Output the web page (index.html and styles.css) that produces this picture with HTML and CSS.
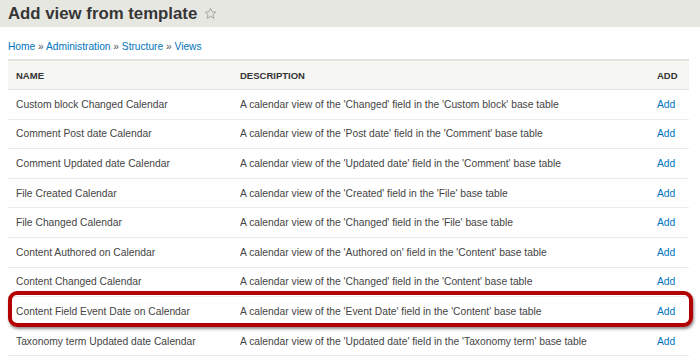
FILE: index.html
```html
<!DOCTYPE html>
<html lang="en">
<head>
<meta charset="UTF-8">
<title>Add view from template</title>
<link rel="stylesheet" href="styles.css">
</head>
<body>

<header class="page-head">
    <h1>Add view from template
        <svg class="star" width="13" height="13" viewBox="0 0 24 24"><path d="M12 2.5l2.9 6.3 6.9.7-5.2 4.6 1.5 6.8L12 17.4l-6.1 3.5 1.5-6.8-5.2-4.6 6.9-.7z" fill="none" stroke="#999" stroke-width="1.6" stroke-linejoin="round"/></svg>
    </h1>
</header>

<div class="content">
    <div class="breadcrumb">
        <a href="#">Home</a> » <a href="#">Administration</a> » <a href="#">Structure</a> » <a href="#">Views</a>
    </div>

    <div class="table-wrap">
        <table class="views">
            <thead>
                <tr>
                    <th class="col-name">Name</th>
                    <th class="col-desc">Description</th>
                    <th class="col-add">Add</th>
                </tr>
            </thead>
            <tbody>
                <tr><td>Custom block Changed Calendar</td><td>A calendar view of the 'Changed' field in the 'Custom block' base table</td><td><a href="#">Add</a></td></tr>
                <tr><td>Comment Post date Calendar</td><td>A calendar view of the 'Post date' field in the 'Comment' base table</td><td><a href="#">Add</a></td></tr>
                <tr><td>Comment Updated date Calendar</td><td>A calendar view of the 'Updated date' field in the 'Comment' base table</td><td><a href="#">Add</a></td></tr>
                <tr><td>File Created Calendar</td><td>A calendar view of the 'Created' field in the 'File' base table</td><td><a href="#">Add</a></td></tr>
                <tr><td>File Changed Calendar</td><td>A calendar view of the 'Changed' field in the 'File' base table</td><td><a href="#">Add</a></td></tr>
                <tr><td>Content Authored on Calendar</td><td>A calendar view of the 'Authored on' field in the 'Content' base table</td><td><a href="#">Add</a></td></tr>
                <tr><td>Content Changed Calendar</td><td>A calendar view of the 'Changed' field in the 'Content' base table</td><td><a href="#">Add</a></td></tr>
                <tr><td>Content Field Event Date on Calendar</td><td>A calendar view of the 'Event Date' field in the 'Content' base table</td><td><a href="#">Add</a></td></tr>
                <tr><td>Taxonomy term Updated date Calendar</td><td>A calendar view of the 'Updated date' field in the 'Taxonomy term' base table</td><td><a href="#">Add</a></td></tr>
            </tbody>
        </table>
        <div class="highlight"></div>
    </div>
</div>

</body>
</html>
```

FILE: styles.css
```css
body {
    margin: 0;
    padding: 0;
    background: #fff;
    font-family: 'Liberation Sans', Arial, sans-serif;
    color: #333;
}

.page-head {
    background-color: #e7e7e2;
    height: 27px;
    padding: 0 8px;
}

.page-head h1 {
    margin: 0;
    font-size: 16.8px;
    line-height: 27px;
    font-weight: bold;
    color: #363636;
    display: flex;
    align-items: center;
    gap: 7px;
}

.star {
    margin-top: -1px;
}

.content {
    padding: 0 8px;
}

.breadcrumb {
    font-size: 10.2px;
    line-height: 14px;
    padding: 13px 0 5px;
    color: #555;
}

a {
    color: #0074bd;
    text-decoration: none;
}

.table-wrap {
    position: relative;
    width: 681px;
}

.views {
    width: 100%;
    border-collapse: collapse;
    border-top: 2px solid #e4e4df;
    font-size: 10.3px;
}

.views th {
    background: #f6f6f3;
    text-align: left;
    text-transform: uppercase;
    font-size: 9.5px;
    font-weight: bold;
    color: #333;
    height: 28px;
    padding: 0 8px;
    border-bottom: 1px solid #e4e4df;
}

.views td {
    height: 28.6px;
    padding: 0 8px;
    border-bottom: 1px solid #ebebe7;
    color: #444;
    white-space: nowrap;
}

.col-name {
    width: 208px;
}

.col-add {
    width: 24px;
}

.highlight {
    position: absolute;
    left: 0;
    top: 232px;
    width: 677px;
    height: 28px;
    border: 4px solid #b30000;
    border-radius: 9px;
    box-shadow: 1px 2px 3px rgba(0, 0, 0, 0.45);
    pointer-events: none;
}
```
